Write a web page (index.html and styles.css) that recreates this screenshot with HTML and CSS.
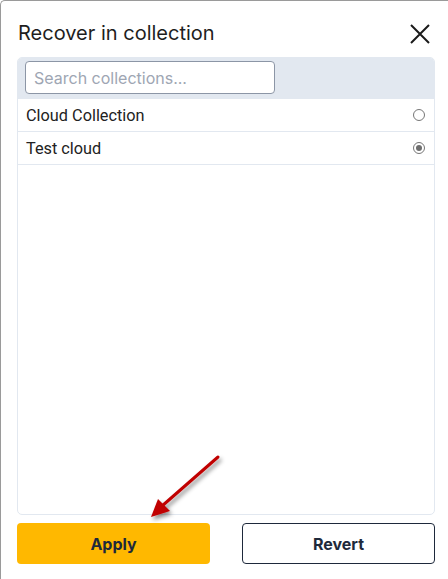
FILE: index.html
```html
<!DOCTYPE html>
<html>
<head>
<meta charset="utf-8">
<link rel="stylesheet" href="styles.css">
</head>
<body>
<div class="dialog">
  <div class="header">
    <h1 class="title">Recover in collection</h1>
    <button class="close" aria-label="Close">
      <svg width="20" height="20" viewBox="0 0 20 20"><path d="M1 1 L19 19 M19 1 L1 19" stroke="#1a1a1a" stroke-width="2" fill="none"/></svg>
    </button>
  </div>
  <div class="panel">
    <div class="panel-head">
      <input class="search" type="text" placeholder="Search collections...">
    </div>
    <div class="row">
      <span class="label">Cloud Collection</span>
      <span class="radio"></span>
    </div>
    <div class="row">
      <span class="label">Test cloud</span>
      <span class="radio checked"></span>
    </div>
  </div>
  <div class="actions">
    <button class="btn apply">Apply</button>
    <button class="btn revert">Revert</button>
  </div>
  <svg class="arrow" width="90" height="80" viewBox="0 0 90 80">
    <defs>
      <filter id="sh" x="-30%" y="-30%" width="160%" height="160%">
        <feDropShadow dx="2" dy="3" stdDeviation="2" flood-color="#000" flood-opacity="0.45"/>
      </filter>
    </defs>
    <g filter="url(#sh)">
      <line x1="76" y1="6" x2="20" y2="55" stroke="#c00000" stroke-width="3" stroke-linecap="round"/>
      <polygon points="9,66 16,48 28,60" fill="#c00000"/>
    </g>
  </svg>
</div>
</body>
</html>
```
FILE: styles.css
```css
html, body {
  margin: 0;
  padding: 0;
  background: #ffffff;
}
body {
  font-family: "Inter", "Roboto", sans-serif;
  width: 448px;
  height: 579px;
  overflow: hidden;
}
.dialog {
  position: relative;
  box-sizing: border-box;
  height: 579px;
  border-top: 1px solid #9a9a9a;
  border-left: 1px solid #9a9a9a;
  border-top-left-radius: 5px;
  padding: 0 13px 0 16px;
  display: flex;
  flex-direction: column;
}
.header {
  height: 56px;
  display: flex;
  align-items: center;
  justify-content: space-between;
}
.title {
  margin: 0;
  font-size: 20px;
  font-weight: 400;
  color: #1e1e1e;
  padding-left: 1px;
  padding-top: 8px;
}
.close {
  border: 0;
  background: none;
  padding: 0;
  margin-right: 5px;
  margin-top: 9px;
  width: 20px;
  height: 20px;
  display: flex;
}
.panel {
  height: 458px;
  box-sizing: border-box;
  border: 1px solid #e2e8f0;
  border-radius: 5px;
  overflow: hidden;
}
.panel-head {
  background: #e2e8f0;
  height: 41px;
  box-sizing: border-box;
  padding: 3px 7px;
}
.search {
  box-sizing: border-box;
  width: 250px;
  height: 33px;
  border: 1px solid #8c96a6;
  border-radius: 4px;
  padding: 0 8px;
  font-family: "Inter", "Roboto", sans-serif;
  font-size: 16px;
  color: #333;
  background: #fff;
  outline: none;
}
.search::placeholder {
  color: #9ea6b3;
}
.row {
  height: 33px;
  box-sizing: border-box;
  border-bottom: 1px solid #e2e8f0;
  display: flex;
  align-items: center;
  justify-content: space-between;
  padding: 0 9px 0 8px;
}
.label {
  font-family: "Roboto", sans-serif;
  font-size: 16.3px;
  color: #222;
}
.radio {
  width: 12px;
  height: 12px;
  box-sizing: border-box;
  border: 1px solid #767676;
  border-radius: 50%;
  background: #fff;
  position: relative;
}
.radio.checked::after {
  content: "";
  position: absolute;
  left: 2px;
  top: 2px;
  width: 6px;
  height: 6px;
  border-radius: 50%;
  background: #6e6e6e;
}
.actions {
  margin-top: 8px;
  display: grid;
  grid-template-columns: 193px 193px;
  justify-content: space-between;
  width: 418px;
}
.btn {
  height: 41px;
  border-radius: 4px;
  font-family: "Inter", "Roboto", sans-serif;
  font-size: 16px;
  font-weight: 700;
  color: #1e293b;
  box-sizing: border-box;
}
.apply {
  background: #ffb800;
  border: 0;
}
.revert {
  background: #fff;
  border: 1px solid #1e293b;
}
.arrow {
  position: absolute;
  left: 141px;
  top: 450px;
  overflow: visible;
}
```
